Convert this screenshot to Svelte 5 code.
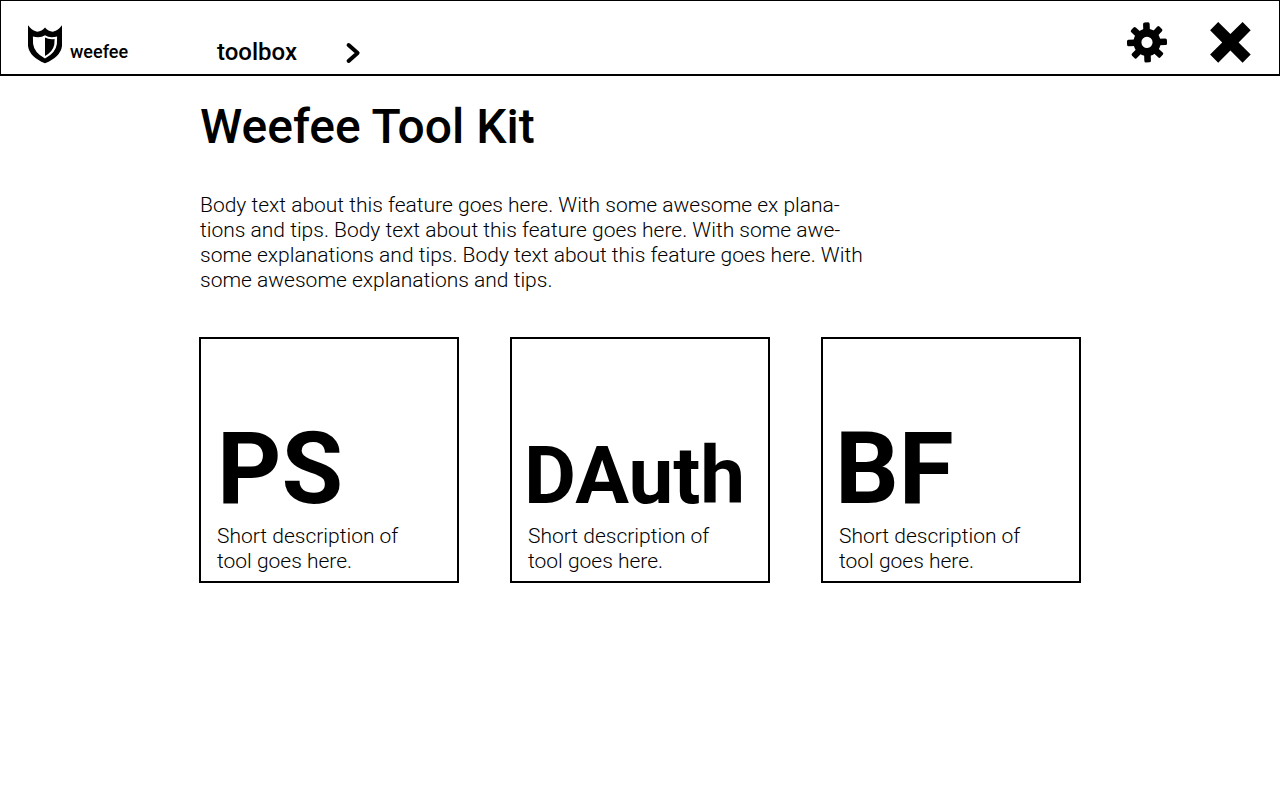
<script>
  const intro = [
    'Body text about this feature goes here. With some awesome ex plana-',
    'tions and tips. Body text about this feature goes here. With some awe-',
    'some explanations and tips. Body text about this feature goes here. With',
    'some awesome explanations and tips.'
  ];

  const tools = [
    { name: 'PS', size: 'large' },
    { name: 'DAuth', size: 'wide' },
    { name: 'BF', size: 'large' }
  ];

  const teeth = [0, 45, 90, 135, 180, 225, 270, 315];
</script>

<header class="bar">
  <a class="brand" href="#home">
    <svg width="36" height="40" viewBox="0 0 36 40" aria-hidden="true">
      <path
        fill-rule="evenodd"
        d="M1 1.3 Q5 6.5 9.5 7.600 Q14.500 8 18 3.600 Q21.500 8 26.500 7.600 Q31 6.500 35 1.300 L35 22 Q33.500 33 18 39.300 Q2.500 33 1 22 Z
           M5.900 12.400 Q13 14.500 18 11.300 Q23 14.500 30.100 12.400 L29.900 20 Q28.700 29 18 34.400 Q7.300 29 6.100 20 Z"
      />
      <path d="M18 13.400 Q22 15.800 27.600 15 L27.300 20.500 Q26 27.500 18 32 Z" />
    </svg>
    <span>weefee</span>
  </a>

  <nav class="crumbs" aria-label="Breadcrumb">
    <a href="#toolbox">toolbox</a>
    <svg width="16" height="24" viewBox="0 0 16 24" aria-hidden="true">
      <path
        d="M3.600 5 L12.600 13 L3.600 21"
        fill="none"
        stroke="#000"
        stroke-width="4"
        stroke-linecap="round"
        stroke-linejoin="round"
      />
    </svg>
  </nav>

  <div class="actions">
    <button type="button" aria-label="Settings">
      <svg width="42" height="42" viewBox="-22 -20.4 42 42" aria-hidden="true">
        <g transform="rotate(-2)">
          {#each teeth as angle}
            <rect x="-3.3" y="-20" width="6.6" height="10" rx="1.6" transform="rotate({angle})" />
          {/each}
          <circle r="9.6" fill="none" stroke="#000" stroke-width="8" />
        </g>
      </svg>
    </button>
    <button type="button" aria-label="Close">
      <svg width="42" height="42" viewBox="-0.4 0.6 42 42" aria-hidden="true">
        <path d="M8.800 .7 L21 12.700 L33.200 .7 L41.300 8.900 L29.200 21 L41.300 33.200 L33.200 41.300 L21 29.200 L8.800 41.300 L.7 33.200 L12.800 21 L.7 8.900 Z" />
      </svg>
    </button>
  </div>
</header>

<main>
  <h1>Weefee Tool Kit</h1>
  <p class="intro">
    {#each intro as line, i}{#if i > 0}<br />{/if}{line}{/each}
  </p>

  <section class="tools" aria-label="Tools">
    {#each tools as tool}
      <a class="card" href="#{tool.name}">
        <h2><span class={tool.size}>{tool.name}</span></h2>
        <p>Short description of tool goes here.</p>
      </a>
    {/each}
  </section>
</main>

<style>
  :global(body) {
    background: #fff;
    color: #000;
    font-family: Roboto, sans-serif;
  }

  a {
    color: inherit;
    text-decoration: none;
  }

  svg {
    display: block;
    overflow: visible;
  }

  h1,
  h2,
  p {
    margin: 0;
  }

  .bar {
    display: flex;
    align-items: flex-end;
    padding: 21px 28px 10px 26px;
    border: 1px solid #000;
    border-bottom-width: 2px;
  }

  .brand {
    display: flex;
    align-items: flex-end;
    gap: 7px;
    width: 190px;
    font-size: 18px;
    font-weight: 500;
    line-height: 24px;
  }

  .crumbs {
    display: flex;
    align-items: center;
    gap: 48px;
    font-size: 24px;
    font-weight: 500;
    line-height: 24px;
  }

  .actions {
    display: flex;
    gap: 42px;
    margin-left: auto;
  }

  button {
    padding: 0;
    border: 0;
    background: none;
    cursor: pointer;
  }

  main {
    max-width: 882px;
    margin: 0 auto;
    padding: 23px 16px 32px;
  }

  h1 {
    padding-left: 1px;
    font-size: 48px;
    font-weight: 500;
    line-height: 56px;
  }

  .intro {
    padding-left: 1px;
    margin-top: 38px;
  }

  p {
    font-size: 21px;
    font-weight: 300;
    line-height: 25px;
  }

  .tools {
    display: grid;
    grid-template-columns: repeat(3, 1fr);
    gap: 51px;
    margin-top: 44px;
  }

  .card {
    box-sizing: border-box;
    display: flex;
    flex-direction: column;
    justify-content: flex-end;
    min-height: 246px;
    padding: 16px;
    padding-bottom: 7px;
    border: 2px solid #000;
  }

  .card p {
    padding-right: 32px;
  }

  h2 {
    margin-bottom: 5px;
    font-size: 100px;
    font-weight: 700;
    line-height: 100px;
  }

  .card + .card h2 {
    margin-left: -4px;
  }

  .large {
    font-size: 100px;
  }

  .wide {
    font-size: 80px;
    line-height: 80px;
  }
</style>
